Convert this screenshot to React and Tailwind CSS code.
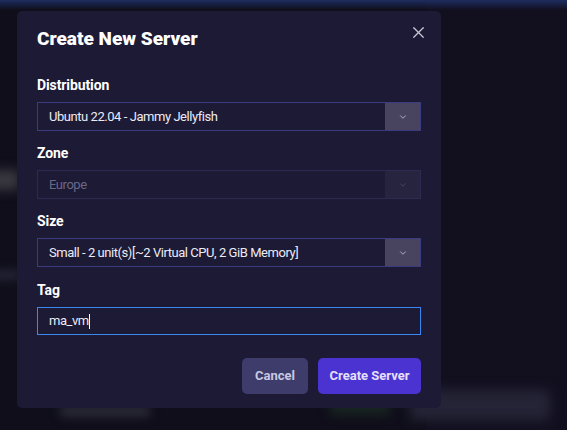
import { X, ChevronDown } from 'lucide-react';

const FONT = { fontFamily: 'Roboto, "Noto Sans", sans-serif' };

const Field = ({ label, value, disabled }) => (
  <div className="flex flex-col gap-[7px]">
    <span className="text-[14px] leading-5 font-bold text-white tracking-[-0.1px]">{label}</span>
    <div
      className={`flex h-[29px] border ${
        disabled ? 'border-[#2c2a50]' : 'border-[#3b3c7e]'
      }`}
    >
      <div
        className={`flex-1 flex items-center pl-[11px] text-[13px] tracking-[-0.45px] ${
          disabled ? 'text-[#6a6785]' : 'text-[#ecebf5]'
        }`}
      >
        {value}
      </div>
      <div
        className={`w-[35px] flex items-center justify-center ${
          disabled ? 'bg-[#27243f] text-[#4e4b68]' : 'bg-[#48435f] text-[#c4c0e2]'
        }`}
      >
        <ChevronDown size={10} strokeWidth={2} />
      </div>
    </div>
  </div>
);

export default function App() {
  return (
    <div
      className="relative w-full h-[430px] overflow-hidden bg-[#0f0e1a]"
      style={FONT}
    >
      {/* blurred page behind the dialog */}
      <div className="absolute right-0 top-0 w-[140px] h-[430px] bg-[#120f1f]" />
      <div className="absolute inset-x-0 top-0 h-[10px] bg-gradient-to-b from-[#1d2c60] to-transparent" />
      <div className="absolute left-[-20px] top-[170px] w-[40px] h-[20px] rounded bg-[#3a3940] blur-[6px]" />
      <div className="absolute left-[-10px] top-[270px] w-[30px] h-[10px] rounded bg-[#262536] blur-[5px]" />
      <div className="absolute left-[60px] top-[405px] w-[90px] h-[12px] rounded bg-[#2a2935] blur-[5px]" />
      <div className="absolute left-[330px] top-[400px] w-[60px] h-[14px] rounded bg-[#1a2a22] blur-[6px]" />
      <div className="absolute left-[410px] top-[390px] w-[140px] h-[30px] rounded bg-[#252436] blur-[6px]" />

      <div className="relative ml-[17px] mt-[11px] w-[424px] h-[397px] rounded-[5px] bg-[#1d1a36] px-[20px] pt-[14px] pb-[14px] flex flex-col">
        <div className="flex items-start justify-between">
          <h1 className="text-[19px] leading-[28px] font-black text-white">
            Create New Server
          </h1>
          <X size={19} strokeWidth={1.5} className="mt-[-2px] mr-[-7px] text-[#c9c8d8]" />
        </div>

        <div className="mt-[22px] flex flex-col gap-[12px]">
          <Field label="Distribution" value="Ubuntu 22.04 - Jammy Jellyfish" />
          <Field label="Zone" value="Europe" disabled />
          <Field label="Size" value="Small - 2 unit(s)[~2 Virtual CPU, 2 GiB Memory]" />
          <div className="mt-[1px] flex flex-col gap-[7px]">
            <span className="text-[14px] leading-5 font-bold text-white tracking-[-0.1px]">Tag</span>
            <div className="h-[28px] border border-[#3b86f0] flex items-center pl-[11px] text-[13px] tracking-[-0.45px] text-[#ecebf5]">
              ma_vm<span className="w-px h-[15px] bg-white" />
            </div>
          </div>
        </div>

        <div className="mt-auto flex justify-end gap-[10px]">
          <button className="w-[66px] h-[36px] rounded-[5px] bg-[#3d3c6b] text-[13px] font-bold text-[#c9c8e0]">
            Cancel
          </button>
          <button className="w-[103px] h-[36px] rounded-[5px] bg-[#4b33d2] text-[13px] font-bold text-[#e4e0fb]">
            Create Server
          </button>
        </div>
      </div>
    </div>
  );
}
